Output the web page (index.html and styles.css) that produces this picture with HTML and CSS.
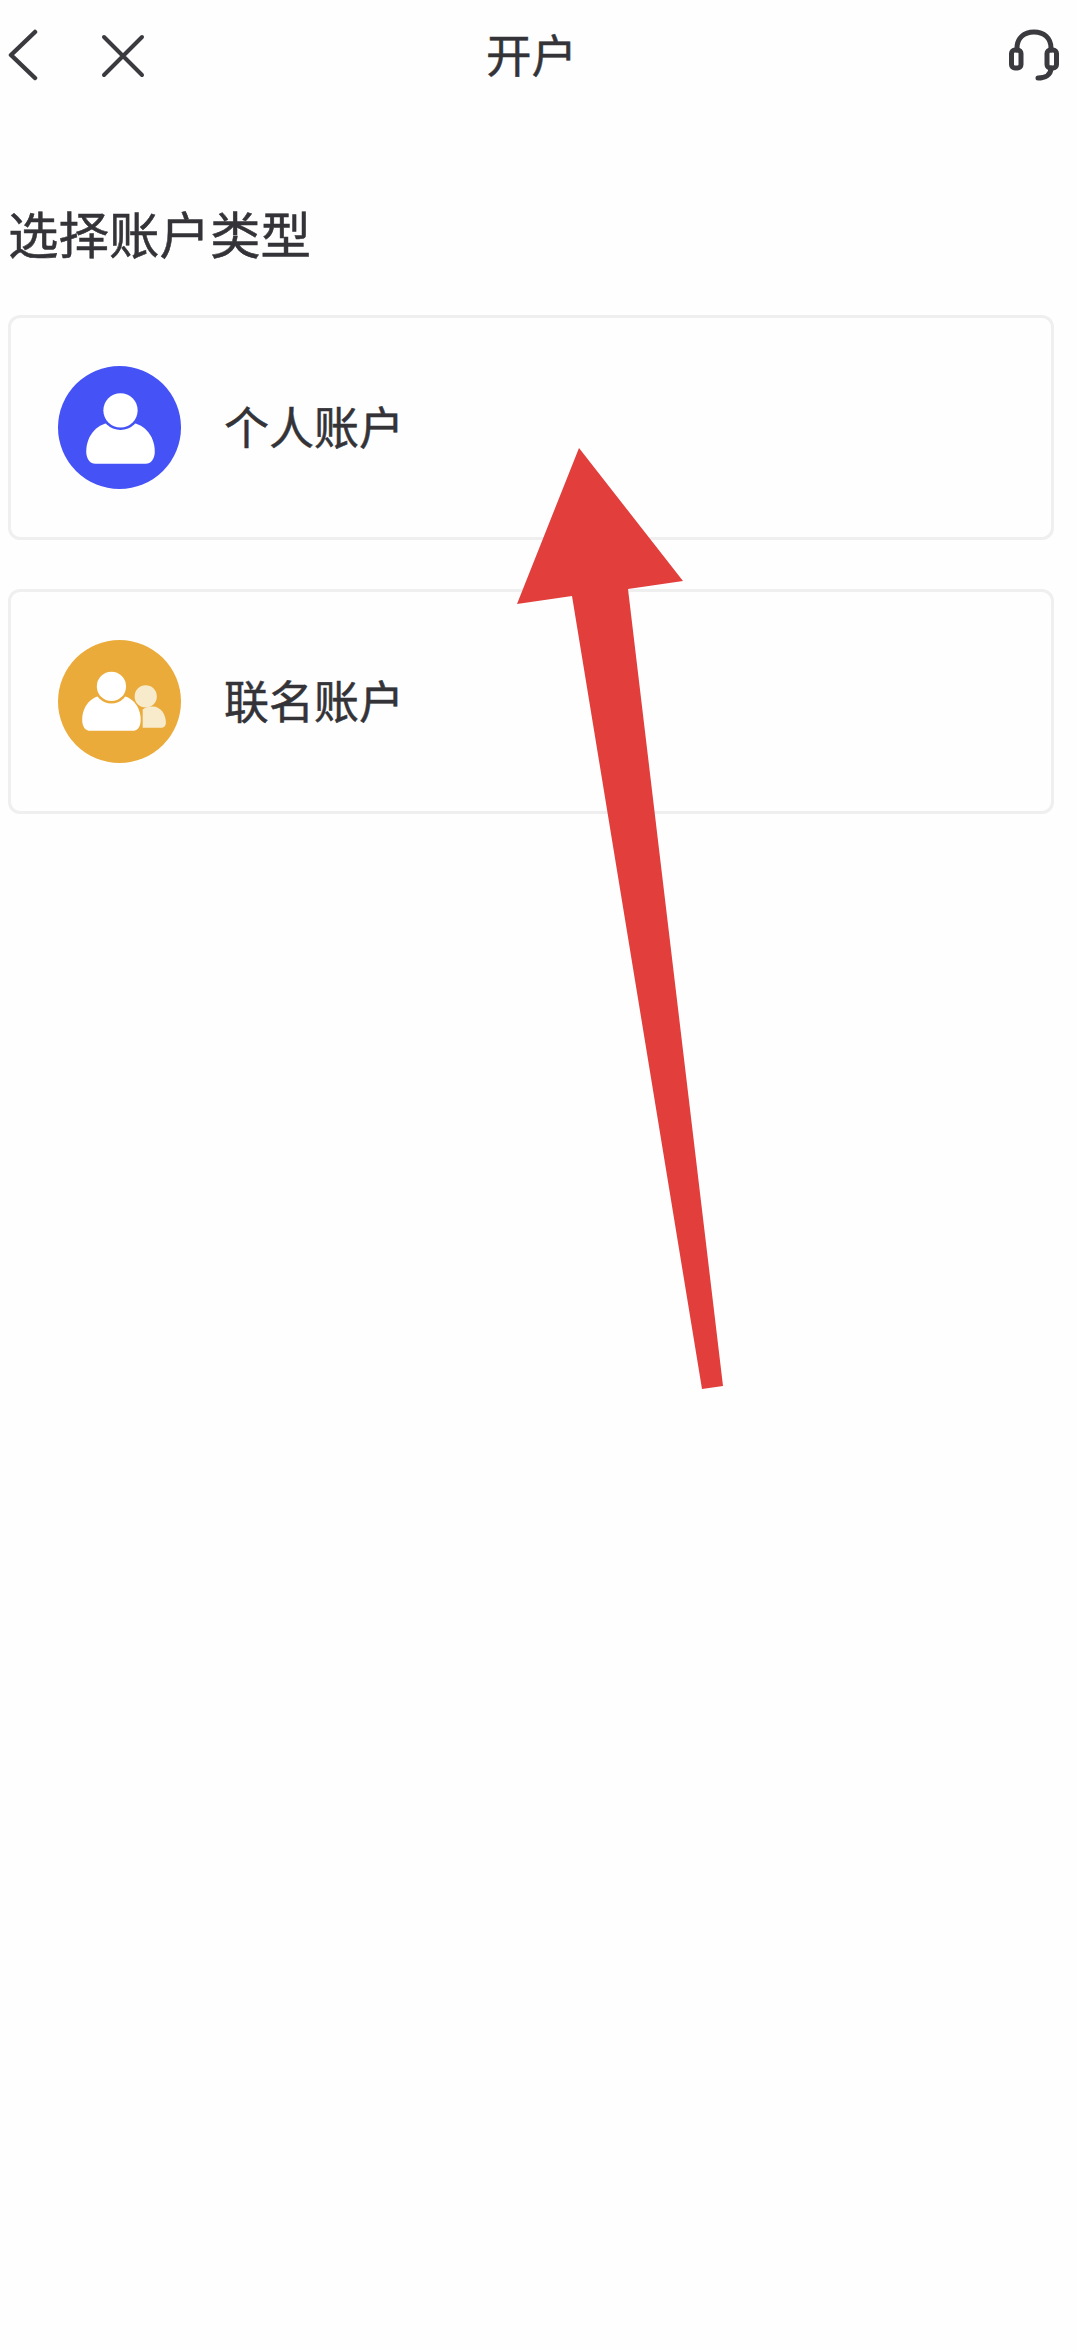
FILE: index.html
```html
<!DOCTYPE html>
<html lang="zh-CN">
<head>
<meta charset="utf-8">
<title>开户</title>
<link rel="stylesheet" href="styles.css">
</head>
<body>
<div class="page">
  <header class="nav">
    <svg class="icon-back" viewBox="0 0 30 52"><path d="M27 3 L3 26 L27 49"/></svg>
    <svg class="icon-close" viewBox="0 0 44 44"><path d="M3 3 L41 41 M41 3 L3 41"/></svg>
    <div class="nav-title">开户</div>
    <svg class="icon-headset" viewBox="0 0 50 52">
      <path d="M8 21 V19 C8 9 15 3 25 3 C35 3 42 9 42 19 V21"/>
      <rect x="2.5" y="21" width="9.5" height="18" rx="3.5"/>
      <rect x="38" y="21" width="9.5" height="18" rx="3.5"/>
      <path d="M42 39 C42 46 36 49 29 49"/>
    </svg>
  </header>
  <h1 class="heading">选择账户类型</h1>
  <div class="cards">
    <div class="card">
      <svg class="avatar" viewBox="0 0 122 122">
        <circle class="blue" cx="61" cy="61" r="61"/>
        <path class="white" d="M28 85 C28 68 40 56 54 56 H70 C84 56 96 68 96 85 C96 92 92 97 87 97 H37 C32 97 28 92 28 85 Z"/>
        <circle class="blue" cx="62" cy="44" r="19.5"/>
        <circle class="white" cx="62" cy="44" r="17"/>
      </svg>
      <span class="label">个人账户</span>
    </div>
    <div class="card">
      <svg class="avatar" viewBox="0 0 122 122">
        <circle class="orange" cx="61" cy="61" r="61"/>
        <circle class="pale" cx="87" cy="56" r="11"/>
        <path class="pale" d="M84 69 C86 67 90 66 94 66 C102 66 107 74 107 82 C107 85 105 87 102 87 H84 Z"/>
        <path class="white" d="M24 79 C24 65 34 55 45 55 H61 C72 55 82 65 82 79 C82 86 79 90 74 90 H32 C27 90 24 86 24 79 Z"/>
        <circle class="orange" cx="53" cy="46" r="17"/>
        <circle class="white" cx="53" cy="46" r="14.5"/>
      </svg>
      <span class="label">联名账户</span>
    </div>
  </div>
  <svg class="arrow" viewBox="0 0 1077 2351">
    <polygon points="579,448 683,581 628,589 723,1386 702,1389 572,596 517,604"/>
  </svg>
</div>
</body>
</html>
```
FILE: styles.css
```css
* { box-sizing: border-box; }
html, body { margin: 0; padding: 0; background: #fefefe; }
body { font-family: "Noto Sans CJK SC", "Noto Sans", sans-serif; color: #333338; }
.page { position: relative; width: 1077px; height: 2351px; padding: 0 24px 0 8px; overflow: hidden; }
.nav { display: flex; align-items: center; height: 110px; }
.nav svg { fill: none; stroke: #3a3a3f; }
.icon-back { width: 30px; height: 52px; stroke-width: 4.5; stroke-linecap: round; stroke-linejoin: round; }
.icon-close { width: 44px; height: 44px; margin-left: 63px; margin-top: 1px; stroke-width: 4; stroke-linecap: round; }
.nav-title { margin-left: 341px; margin-bottom: 4px; font-size: 45.5px; line-height: 60px; -webkit-text-stroke: 0.5px #333338; }
.icon-headset { width: 50px; height: 52px; margin-left: auto; margin-right: -6px; stroke-width: 5; stroke-linecap: round; }
.heading { margin: 92px 0 0 0; font-size: 50.5px; font-weight: 400; line-height: 60px; -webkit-text-stroke: 0.5px #333338; }
.cards { display: flex; flex-direction: column; gap: 49px; margin-top: 53px; margin-right: -1px; }
.card { display: flex; align-items: center; gap: 43px; height: 225px; padding-left: 47px; border: 3px solid #efefef; border-radius: 12px; }
.avatar { width: 123px; height: 123px; flex: none; }
.blue { fill: #4452f6; }
.orange { fill: #ebab3a; }
.white { fill: #ffffff; }
.pale { fill: #f8ebcc; }
.label { margin-bottom: 3px; font-size: 45px; line-height: 60px; -webkit-text-stroke: 0.5px #333338; }
.arrow { position: absolute; left: 0; top: 0; width: 1077px; height: 2351px; }
.arrow polygon { fill: #e13e3c; }
```
